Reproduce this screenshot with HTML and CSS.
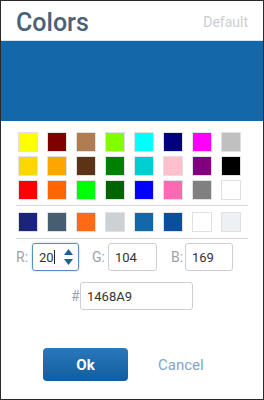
FILE: index.html
```html
<!DOCTYPE html>
<html lang="en">
<head>
    <meta charset="UTF-8">
    <title>Colors</title>
    <link rel="stylesheet" href="styles.css">
</head>
<body>
    <div class="dialog">
        <div class="header">
            <h1>Colors</h1>
            <span class="default">Default</span>
        </div>
        <div class="preview"></div>

        <div class="body">
            <div class="swatches">
                <span class="sw" style="background:#ffff00"></span>
                <span class="sw" style="background:#800000"></span>
                <span class="sw" style="background:#b07d52"></span>
                <span class="sw" style="background:#80ff00"></span>
                <span class="sw" style="background:#00ffff"></span>
                <span class="sw" style="background:#000080"></span>
                <span class="sw" style="background:#ff00ff"></span>
                <span class="sw" style="background:#c0c0c0"></span>

                <span class="sw" style="background:#ffd700"></span>
                <span class="sw" style="background:#ffa500"></span>
                <span class="sw" style="background:#5c3317"></span>
                <span class="sw" style="background:#008000"></span>
                <span class="sw" style="background:#00ced1"></span>
                <span class="sw" style="background:#ffc0cb"></span>
                <span class="sw" style="background:#800080"></span>
                <span class="sw" style="background:#000000"></span>

                <span class="sw" style="background:#ff0000"></span>
                <span class="sw" style="background:#ff6600"></span>
                <span class="sw" style="background:#00ff00"></span>
                <span class="sw" style="background:#006400"></span>
                <span class="sw" style="background:#0000ff"></span>
                <span class="sw" style="background:#ff69b4"></span>
                <span class="sw" style="background:#808080"></span>
                <span class="sw" style="background:#ffffff"></span>
            </div>

            <div class="swatches recent">
                <span class="sw" style="background:#1c237c"></span>
                <span class="sw" style="background:#465d72"></span>
                <span class="sw" style="background:#ff6a13"></span>
                <span class="sw" style="background:#ccd1d6"></span>
                <span class="sw" style="background:#1468a9"></span>
                <span class="sw" style="background:#0b4e9e"></span>
                <span class="sw" style="background:#ffffff"></span>
                <span class="sw" style="background:#eef1f4"></span>
            </div>

            <div class="rgb">
                <label class="lbl-r">R:</label>
                <div class="field focus">
                    <span class="val">20<span class="caret"></span></span>
                    <span class="spin">
                        <svg width="9" height="18" viewBox="0 0 9 18">
                            <path d="M4.5 1 L9 7 L0 7 Z" fill="#1d5f9a"/>
                            <path d="M0 11 L9 11 L4.5 17 Z" fill="#1d5f9a"/>
                        </svg>
                    </span>
                </div>
                <label class="lbl-g">G:</label>
                <div class="field mid"><span class="val">104</span></div>
                <label class="lbl-b">B:</label>
                <div class="field"><span class="val">169</span></div>
            </div>

            <div class="hex">
                <label>#</label>
                <div class="field wide"><span class="val">1468A9</span></div>
            </div>

            <div class="actions">
                <button class="ok">Ok</button>
                <button class="cancel">Cancel</button>
            </div>
        </div>
    </div>
</body>
</html>
```

FILE: styles.css
```css
body {
    margin: 0;
    font-family: Roboto, "Liberation Sans", sans-serif;
    background: #fff;
}
.dialog {
    width: 264px;
    height: 400px;
    box-sizing: border-box;
    border: 1px solid #2a2a2a;
    background: #fff;
}
.header {
    height: 39px;
    display: flex;
    align-items: center;
    justify-content: space-between;
    padding: 0 15px;
}
.header h1 {
    margin: 0;
    font-size: 25px;
    font-weight: 500;
    color: #4a6178;
    line-height: 1;
    margin-top: 4px;
}
.default {
    font-size: 14px;
    color: #c9ced3;
    margin-top: 2px;
}
.preview {
    height: 80px;
    background: #1468a9;
    border-top: 1px solid #d2e6f5;
}
.body {
    padding: 0 15px;
}
.swatches {
    display: grid;
    grid-template-columns: repeat(8, 20px);
    column-gap: 9px;
    row-gap: 4px;
    padding: 11px 2px 5px;
    border-bottom: 1px solid #d4d9de;
}
.swatches.recent {
    padding: 6px 2px 6px;
}
.sw {
    width: 20px;
    height: 20px;
    box-sizing: border-box;
    border: 1px solid #dfe1e3;
}
.rgb {
    display: flex;
    align-items: center;
    margin-top: 4px;
}
label {
    font-size: 14px;
    color: #9aa4ad;
}
.lbl-r { width: 16px; }
.lbl-g { width: 16px; margin-left: 13px; }
.lbl-b { width: 14px; margin-left: 14px; }
.field {
    width: 48px;
    height: 28px;
    box-sizing: border-box;
    border: 1px solid #c9cfd5;
    border-radius: 3px;
    display: flex;
    align-items: center;
    padding-left: 6px;
    font-size: 13px;
    color: #333;
}
.field.mid { width: 49px; }
.field.focus {
    width: 47px;
    border-color: #5b8fc2;
    box-shadow: 0 0 2px #9cc1e4;
    justify-content: space-between;
    padding-right: 5px;
}
.caret {
    display: inline-block;
    width: 1px;
    height: 14px;
    background: #222;
    vertical-align: -2px;
}
.spin { display: flex; }
.hex {
    display: flex;
    align-items: center;
    margin-top: 11px;
    padding-left: 55px;
}
.hex label { width: 9px; }
.field.wide { width: 113px; }
.actions {
    display: flex;
    align-items: center;
    margin-top: 38px;
    padding-left: 27px;
}
button {
    font-family: Roboto, "Liberation Sans", sans-serif;
    font-size: 14px;
    border: none;
    cursor: pointer;
}
.ok {
    width: 85px;
    height: 33px;
    border-radius: 4px;
    background: linear-gradient(#2a78bb, #105ea0);
    color: #fff;
    font-weight: bold;
    font-size: 15px;
}
.cancel {
    background: none;
    color: #7ea6cc;
    margin-left: 24px;
    font-size: 15px;
}
```
